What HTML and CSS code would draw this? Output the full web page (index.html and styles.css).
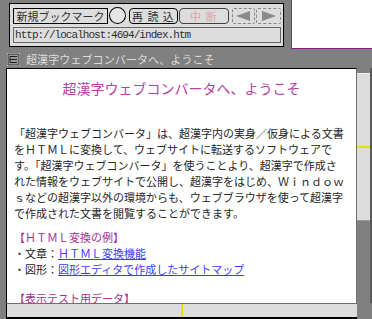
FILE: index.html
```html
<!DOCTYPE html>
<html lang="ja">
<head>
<meta charset="utf-8">
<link rel="stylesheet" href="styles.css">
</head>
<body>
<div class="top">
  <div class="toolbar">
    <div class="panel">
      <div class="btnrow">
        <div class="btn bm">新規ブックマーク</div>
        <div class="circle"></div>
        <div class="btn rnd reload">再 読 込</div>
        <div class="btn rnd stop">中 断</div>
        <div class="btn arrow back"><svg width="16" height="10" viewBox="0 0 16 10"><polygon points="1,5 15,0 15,10" fill="#8a8a8a"/></svg></div>
        <div class="btn arrow fwd"><svg width="16" height="10" viewBox="0 0 16 10"><polygon points="15,5 1,0 1,10" fill="#8a8a8a"/></svg></div>
      </div>
      <div class="url"><span class="urltext">http://localhost:4694/index.htm</span></div>
    </div>
  </div>
  <div class="filler"></div>
</div>
<div class="win">
  <div class="titlebar">
    <svg class="ticon" width="13" height="13" viewBox="0 0 13 13">
      <rect x="0.5" y="0.5" width="12" height="12" fill="#9a9a9a" stroke="#e8e8e8"/>
      <rect x="1" y="1" width="11" height="11" fill="none" stroke="#303030" stroke-width="1"/>
      <line x1="3" y1="3.5" x2="3" y2="9.5" stroke="#202020"/>
      <line x1="3" y1="3.5" x2="10" y2="3.5" stroke="#202020"/>
      <line x1="3" y1="6.5" x2="10" y2="6.5" stroke="#202020"/>
      <line x1="3" y1="9.5" x2="10" y2="9.5" stroke="#202020"/>
    </svg>
    <span class="ttext">超漢字ウェブコンバータへ、ようこそ</span>
  </div>
  <div class="body">
    <div class="content">
      <h1 class="ttl">超漢字ウェブコンバータへ、ようこそ</h1>
      <p class="para">「超漢字ウェブコンバータ」は、超漢字内の実身／仮身による文書<br>をＨＴＭＬに変換して、ウェブサイトに転送するソフトウェアで<br>す。「超漢字ウェブコンバータ」を使うことより、超漢字で作成さ<br>れた情報をウェブサイトで公開し、超漢字をはじめ、Ｗｉｎｄｏｗ<br>ｓなどの超漢字以外の環境からも、ウェブブラウザを使って超漢字<br>で作成された文書を閲覧することができます。</p>
      <div class="sec">【ＨＴＭＬ変換の例】</div>
      <div class="item">・文章：<a class="lnk" href="#">ＨＴＭＬ変換機能</a></div>
      <div class="item">・図形：<a class="lnk" href="#">図形エディタで作成したサイトマップ</a></div>
      <div class="sec sec2">【表示テスト用データ】</div>
    </div>
    <div class="vscroll">
      <div class="vthumb"><div class="ymark-h"></div></div>
    </div>
  </div>
  <div class="bottom">
    <div class="hscroll"><div class="ymark-v"></div></div>
    <div class="corner"></div>
  </div>
</div>
</body>
</html>
```
FILE: styles.css
```css
* { box-sizing: border-box; }
html, body { margin: 0; padding: 0; }
body {
  width: 372px;
  height: 319px;
  overflow: hidden;
  background: #ffffff;
  font-family: "Noto Sans CJK JP", "Noto Sans", sans-serif;
  color: #202020;
}
.top {
  display: flex;
  height: 49px;
}
.toolbar {
  width: 292px;
  height: 49px;
  background: #808080;
  padding: 3px 7px 2px 9px;
  border-right: 1px solid #505050;
}
.panel {
  width: 275px;
  height: 44px;
  background: #dddddd;
  border: 1px solid #000;
  padding: 3px 2px 3px 3px;
  display: flex;
  flex-direction: column;
  gap: 3px;
}
.btnrow {
  display: flex;
  align-items: center;
  height: 17px;
}
.btn {
  height: 16px;
  margin-top: 1px;
  border: 1px solid #000;
  background: #dddddd;
  font-size: 11px;
  line-height: 14px;
  display: flex;
  align-items: center;
  justify-content: center;
  white-space: nowrap;
  color: #303030;
}
.bm { width: 96px; }
.circle {
  width: 17px;
  height: 17px;
  border: 1px solid #000;
  border-radius: 50%;
  background: #e4e4e4;
  margin-left: 1px;
}
.rnd { border-radius: 4px; width: 50px; }
.reload { margin-left: 3px; letter-spacing: 1px; }
.stop { margin-left: 1px; color: #dba8a8; letter-spacing: 1px; border-color: #404040; }
.arrow {
  border: 1px dashed #888;
  border-radius: 2px;
}
.back { width: 24px; margin-left: 3px; }
.fwd { width: 25px; margin-left: 1px; }
.url {
  height: 16px;
  border: 1px solid #666;
  background: #dddddd;
  padding-left: 1px;
  white-space: nowrap;
  overflow: hidden;
  display: flex;
  align-items: center;
}
.urltext {
  font-family: "Liberation Mono", "DejaVu Sans Mono", monospace;
  font-size: 11px;
  line-height: 13px;
  letter-spacing: -0.95px;
  color: #303030;
}
.filler {
  flex: 1;
  border-bottom: 1px solid #8c1a8c;
}
.win {
  height: 270px;
  background: #808080;
  display: flex;
  flex-direction: column;
}
.titlebar {
  height: 19px;
  display: flex;
  align-items: center;
  padding-left: 7px;
  gap: 6px;
}
.ticon { display: block; margin-top: 1px; }
.ttext {
  font-size: 11px;
  letter-spacing: 0.1px;
  color: #dcdcdc;
  white-space: nowrap;
  line-height: 14px;
}
.body {
  height: 235px;
  display: flex;
  padding-left: 6px;
}
.content {
  width: 351px;
  height: 235px;
  background: #ffffff;
  border-left: 1px solid #000;
  border-top: 1px solid #000;
  border-right: 1px solid #707070;
  padding: 10px 0 0 7px;
  overflow: hidden;
}
.ttl {
  margin: 0;
  font-size: 14px;
  font-weight: normal;
  line-height: 18px;
  height: 18px;
  text-align: center;
  color: #b8409f;
  padding-right: 7px;
  white-space: nowrap;
}
.para {
  margin: 28px 0 8px 0;
  font-size: 11px;
  line-height: 16px;
  white-space: nowrap;
  color: #262626;
}
.sec {
  font-size: 11px;
  line-height: 16px;
  color: #a8308f;
  white-space: nowrap;
}
.sec2 { margin-top: 13px; }
.item {
  font-size: 11px;
  line-height: 16px;
  white-space: nowrap;
  color: #262626;
}
.lnk {
  color: #3c3cff;
  text-decoration: underline;
}
.vscroll {
  width: 15px;
  height: 235px;
  padding-top: 5px;
  border-right: 2px solid #5a5a5a;
}
.vthumb {
  width: 13px;
  height: 148px;
  background: #dddddd;
  border-top: 1px solid #eeeeee;
  border-bottom: 1px solid #9a9a9a;
  display: flex;
  flex-direction: column;
  justify-content: center;
}
.ymark-h {
  height: 2px;
  background: #e8e000;
}
.bottom {
  height: 16px;
  display: flex;
}
.hscroll {
  width: 351px;
  margin-left: 6px;
  background: #dddddd;
  border-left: 1px solid #000;
  border-top: 1px solid #707070;
  border-bottom: 2px solid #000;
  display: flex;
  justify-content: center;
}
.ymark-v {
  width: 2px;
  background: #e8e000;
}
.corner {
  flex: 1;
  background: #808080;
}
```
